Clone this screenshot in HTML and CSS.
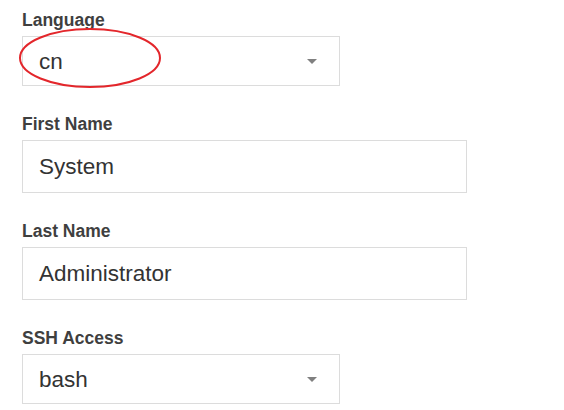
FILE: index.html
```html
<!DOCTYPE html>
<html>
<head>
<meta charset="utf-8">
<link rel="stylesheet" href="styles.css">
</head>
<body>
<form class="form">
  <div class="field">
    <label class="label">Language</label>
    <div class="control select">
      <span class="value">cn</span>
      <span class="caret"></span>
    </div>
  </div>
  <div class="field">
    <label class="label">First Name</label>
    <div class="control input"><span class="value">System</span></div>
  </div>
  <div class="field">
    <label class="label">Last Name</label>
    <div class="control input"><span class="value">Administrator</span></div>
  </div>
  <div class="field">
    <label class="label">SSH Access</label>
    <div class="control select">
      <span class="value">bash</span>
      <span class="caret"></span>
    </div>
  </div>
  <svg class="mark" width="150" height="66" viewBox="0 0 150 66">
    <ellipse cx="75" cy="33" rx="70" ry="29" fill="none" stroke="#e3262b" stroke-width="2"/>
  </svg>
</form>
</body>
</html>
```
FILE: styles.css
```css
html, body {
  margin: 0;
  padding: 0;
  background: #ffffff;
}
body {
  font-family: "Liberation Sans", Arial, sans-serif;
}
.form {
  position: relative;
  padding: 10px 0 0 22px;
  display: flex;
  flex-direction: column;
  gap: 28px;
}
.field {
  display: flex;
  flex-direction: column;
  gap: 6px;
}
.label {
  font-size: 17.5px;
  line-height: 20px;
  font-weight: bold;
  color: #3f3f3f;
}
.control {
  box-sizing: border-box;
  border: 1px solid #dcdcdc;
  display: flex;
  align-items: center;
  padding: 1px 22px 0 16px;
  font-size: 22.5px;
  color: #333333;
}
.select {
  width: 318px;
  height: 50px;
  justify-content: space-between;
}
.input {
  width: 445px;
  height: 53px;
}
.caret {
  width: 0;
  height: 0;
  border-left: 5px solid transparent;
  border-right: 5px solid transparent;
  border-top: 5px solid #808080;
}
.mark {
  position: absolute;
  left: 15px;
  top: 25px;
}
```
